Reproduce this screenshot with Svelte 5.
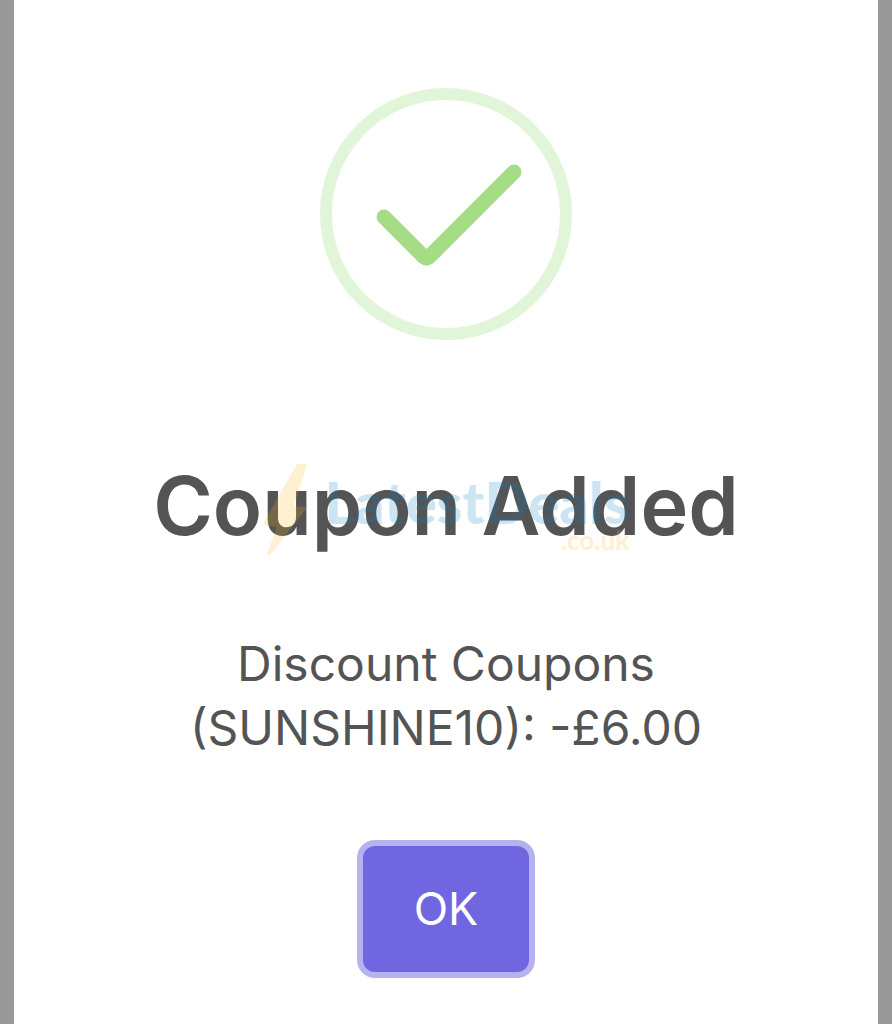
<script lang="ts">
	const code = 'SUNSHINE10';
	const discount = 6;

	let open = $state(true);
</script>

<div class="backdrop">
	{#if open}
		<div class="modal" role="alertdialog" aria-labelledby="title" aria-describedby="message">
			<svg class="success" viewBox="0 0 252 252" aria-hidden="true">
				<circle cx="126" cy="126" r="120" />
				<path d="M64 129 L104 169 Q106.500 171 109 169 L194 84" />
			</svg>

			<div class="heading">
				<h2 id="title">Coupon Added</h2>
				<div class="brand" aria-hidden="true">
					<svg viewBox="0 0 44 92">
						<path d="M34 0 H44 L31 42 L43 43 Q44 43 43 45 L7 91 Q5 92 4 90 L14 63 L2 61 Q0 61 1 58 Z" />
					</svg>
					<div class="wordmark">
						<span class="name">LatestDeals</span>
						<span class="domain">.co.uk</span>
					</div>
				</div>
			</div>

			<p id="message">Discount Coupons ({code}): -£{discount.toFixed(2)}</p>

			<button type="button" onclick={() => (open = false)}>OK</button>
		</div>
	{/if}
</div>

<style>
	:global(body) {
		margin: 0;
		background: #999;
	}

	.backdrop {
		box-sizing: border-box;
		min-height: 100vh;
		padding: 0 14px;
		display: flex;
		font-family: Inter, 'Liberation Sans', sans-serif;
		color: #545454;
	}

	.modal {
		box-sizing: border-box;
		flex: 1;
		display: flex;
		flex-direction: column;
		align-items: center;
		padding: 88px 40px 52px;
		background: #fff;
		text-align: center;
	}

	.success {
		width: 252px;
		height: 252px;
		fill: none;
	}

	.success circle {
		stroke: #e1f5d9;
		stroke-width: 12;
	}

	.success path {
		stroke: #a5dc86;
		stroke-width: 15;
		stroke-linecap: round;
		stroke-linejoin: round;
	}

	.heading {
		position: relative;
		margin-top: 116px;
	}

	h2 {
		margin: 0;
		font-size: 81px;
		line-height: 100px;
		font-weight: 600;
	}

	.brand {
		position: absolute;
		inset: 0;
		display: flex;
		justify-content: center;
		align-items: flex-end;
		gap: 18px;
		opacity: 0.2;
		pointer-events: none;
	}

	.brand svg {
		width: 44px;
		height: 92px;
		fill: #fbb91a;
	}

	.wordmark {
		display: flex;
		flex-direction: column;
		font-family: Lato, 'Liberation Sans', sans-serif;
		font-weight: 900;
		text-align: right;
	}

	.name {
		color: #0c7cc4;
		font-size: 58px;
		line-height: 44px;
	}

	.domain {
		color: #fbb91a;
		font-size: 26px;
		line-height: 32px;
	}

	p {
		max-width: 640px;
		margin: 76px 0 0;
		font-size: 48px;
		line-height: 64px;
	}

	button {
		margin-top: 86px;
		padding: 32px 51px;
		border: 0;
		border-radius: 12px;
		background: #7066e0;
		box-shadow: 0 0 0 6px #b7b2ef;
		color: #fff;
		font-family: inherit;
		font-size: 45px;
		line-height: 62px;
		cursor: pointer;
	}
</style>
